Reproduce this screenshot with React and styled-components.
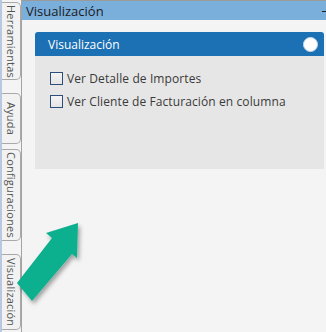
import React from "react";
import styled, { createGlobalStyle } from "styled-components";

const Global = createGlobalStyle`
  html, body { margin: 0; padding: 0; background: #f4f4f4; }
  * { box-sizing: border-box; }
`;

const Page = styled.div`
  position: relative;
  display: flex;
  width: 326px;
  height: 332px;
  overflow: hidden;
  background: #f4f4f4;
  font-family: "Open Sans", sans-serif;
`;

const SideBar = styled.div`
  width: 21px;
  flex: none;
  display: flex;
  flex-direction: column;
  border-left: 2px solid #b9c7e0;
  background: #f4f4f4;
`;

const Tab = styled.div`
  margin-top: ${(p) => p.$top}px;
  height: ${(p) => p.$h}px;
  width: 19px;
  border: 1px solid #a9a9a9;
  border-left: none;
  border-radius: 0 5px 5px 0;
  background: #f2f2f2;
  display: flex;
  align-items: center;
  justify-content: center;
  writing-mode: vertical-rl;
  font-size: 11px;
  color: #555;
  font-family: "Open Sans", sans-serif;
  letter-spacing: 0.2px;
`;

const Main = styled.div`
  flex: 1;
  display: flex;
  flex-direction: column;
  border-left: 1px solid #a3a3a3;
`;

const TitleBar = styled.div`
  height: 20px;
  flex: none;
  background: #7aafdc;
  border-top: 1px solid #9a9a9a;
  display: flex;
  align-items: center;
  justify-content: space-between;
  padding-left: 4px;
  font-family: "Open Sans", sans-serif;
  font-size: 13px;
  color: #1b1b1b;
`;

const Dash = styled.span`
  width: 4px;
  height: 1px;
  background: #222;
  margin-top: 1px;
`;

const Content = styled.div`
  padding: 12px 2px 0 13px;
`;

const Panel = styled.div`
  border-radius: 3px 3px 0 0;
  overflow: hidden;
  background: #e6e6e6;
  height: 137px;
`;

const PanelHead = styled.div`
  height: 24px;
  background: #1c70b4;
  display: flex;
  align-items: center;
  justify-content: space-between;
  padding: 0 6px 0 13px;
  color: #ffffff;
  font-family: "Open Sans", sans-serif;
  font-size: 12px;
`;

const Circle = styled.span`
  width: 15px;
  height: 15px;
  border-radius: 50%;
  background: #ffffff;
  border: 1px solid #c9d6e4;
`;

const PanelBody = styled.div`
  display: flex;
  flex-direction: column;
  gap: 10px;
  padding: 16px 0 0 15px;
`;

const Row = styled.label`
  display: flex;
  align-items: center;
  gap: 4px;
  font-family: "Open Sans", sans-serif;
  font-size: 12px;
  letter-spacing: 0.1px;
  color: #3a3a3a;
  height: 13px;
`;

const Box = styled.span`
  width: 13px;
  height: 13px;
  border: 1px solid #2b4f7a;
  background: linear-gradient(#f4f4f4, #e4e4e4);
  flex: none;
`;

const Arrow = styled.svg`
  position: absolute;
  left: 0;
  top: 0;
  pointer-events: none;
`;

export default function App() {
  return (
    <Page>
      <Global />
      <SideBar>
        <Tab $top={2} $h={78}>Herramientas</Tab>
        <Tab $top={13} $h={51}>Ayuda</Tab>
        <Tab $top={5} $h={92}>Configuraciones</Tab>
        <Tab $top={13} $h={76}>Visualización</Tab>
      </SideBar>
      <Main>
        <TitleBar>
          <span>Visualización</span>
          <Dash />
        </TitleBar>
        <Content>
          <Panel>
            <PanelHead>
              <span>Visualización</span>
              <Circle />
            </PanelHead>
            <PanelBody>
              <Row>
                <Box />
                Ver Detalle de Importes
              </Row>
              <Row>
                <Box />
                Ver Cliente de Facturación en columna
              </Row>
            </PanelBody>
          </Panel>
        </Content>
      </Main>
      <Arrow width="326" height="332" viewBox="0 0 326 332">
        <defs>
          <filter id="sh" x="-20%" y="-20%" width="140%" height="140%">
            <feDropShadow dx="2" dy="3" stdDeviation="2" floodColor="#000" floodOpacity="0.35" />
          </filter>
        </defs>
        <polygon
          points="78,223 46,233 52,238 17,283 32,301 72,254 77,258"
          fill="#10b08e"
          filter="url(#sh)"
        />
      </Arrow>
    </Page>
  );
}
